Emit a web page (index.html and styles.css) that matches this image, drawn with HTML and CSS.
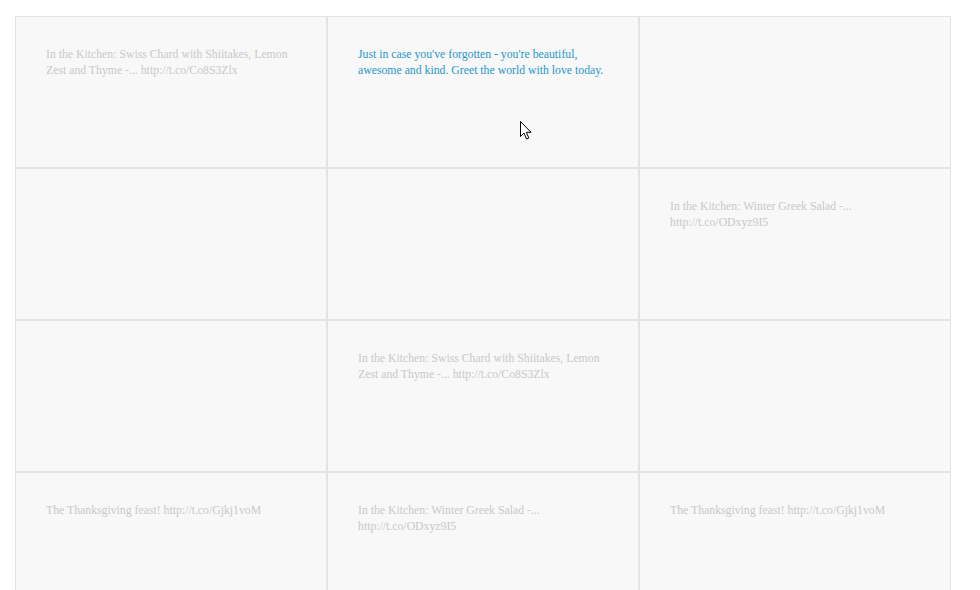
FILE: index.html
```html
<!DOCTYPE html>
<html>
<head>
<meta charset="utf-8">
<link rel="stylesheet" href="styles.css">
</head>
<body>
<div class="grid">
  <div class="cell"><p>In the Kitchen: Swiss Chard with Shiitakes, Lemon Zest and Thyme -... http://t.co/Co8S3Zlx</p></div>
  <div class="cell"><p class="active">Just in case you've forgotten - you're beautiful, awesome and kind. Greet the world with love today.</p></div>
  <div class="cell"></div>
  <div class="cell"></div>
  <div class="cell"></div>
  <div class="cell"><p>In the Kitchen: Winter Greek Salad -... http://t.co/ODxyz9I5</p></div>
  <div class="cell"></div>
  <div class="cell"><p>In the Kitchen: Swiss Chard with Shiitakes, Lemon Zest and Thyme -... http://t.co/Co8S3Zlx</p></div>
  <div class="cell"></div>
  <div class="cell"><p>The Thanksgiving feast! http://t.co/Gjkj1voM</p></div>
  <div class="cell"><p>In the Kitchen: Winter Greek Salad -... http://t.co/ODxyz9I5</p></div>
  <div class="cell"><p>The Thanksgiving feast! http://t.co/Gjkj1voM</p></div>
</div>
<svg class="cursor" width="14" height="20" viewBox="0 0 14 20"><path d="M0.5 0.5 L0.5 15.5 L4 12 L6.5 18 L8.8 17 L6.3 11.3 L11 11.3 Z" fill="#fff" stroke="#000" stroke-width="1" stroke-linejoin="miter"/></svg>
</body>
</html>
```
FILE: styles.css
```css
html, body {
  margin: 0;
  padding: 0;
  background: #ffffff;
}
body {
  font-family: "Liberation Serif", "Times New Roman", serif;
  position: relative;
  height: 590px;
  overflow: hidden;
}
.grid {
  display: grid;
  grid-template-columns: 312px 312px 312px;
  grid-auto-rows: 152px;
  padding: 16px 0 0 15px;
}
.cell {
  box-sizing: border-box;
  border: 1px solid #e4e4e4;
  background: #f8f8f8;
  padding: 30px 30px 0 30px;
}
.cell p {
  margin: 0;
  font-size: 11.75px;
  line-height: 16px;
  color: #c8c8c8;
}
.cell p.active {
  color: #1d96cc;
}
.cursor {
  position: absolute;
  left: 520px;
  top: 121px;
}
```
